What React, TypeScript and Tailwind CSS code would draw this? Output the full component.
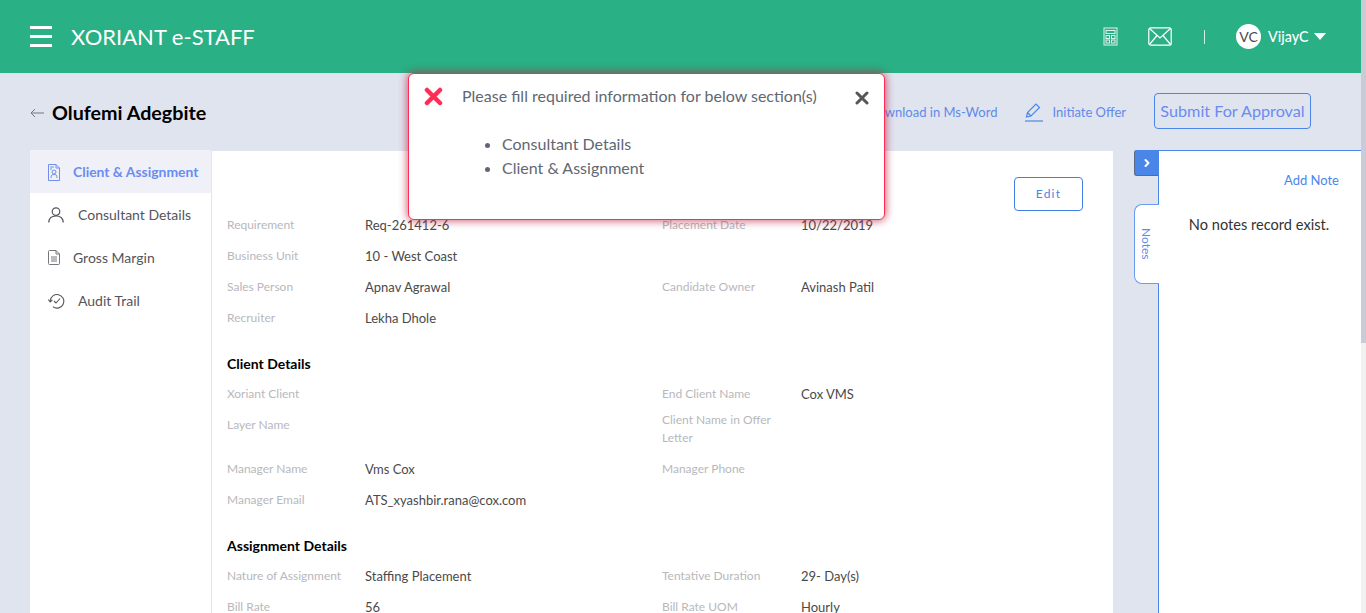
import { ChevronRight } from 'lucide-react';

const font = { fontFamily: 'Lato, sans-serif' };

interface FieldProps {
  label: string;
  value?: string;
  label2?: string;
  value2?: string;
  tall?: boolean;
}

function Row({ label, value, label2, value2, tall }: FieldProps) {
  if (tall) {
    return (
      <div className="grid grid-cols-[138px_297px_139px_1fr] items-start h-[44px]">
        <span className="text-[12px] leading-[29px] text-[#b8b8bc]">{label}</span>
        <span className="text-[13px] leading-[31px] text-[#4a4a4a]">{value}</span>
        <span className="mt-[1px] text-[12px] leading-[18px] text-[#b8b8bc]">{label2}</span>
        <span className="text-[13px] leading-[31px] text-[#4a4a4a]">{value2}</span>
      </div>
    );
  }
  return (
    <div className="grid grid-cols-[138px_297px_139px_1fr] items-center h-[31px]">
      <span className="pb-[2px] text-[12px] text-[#b8b8bc]">{label}</span>
      <span className="text-[13px] text-[#4a4a4a]">{value}</span>
      <span className="pb-[2px] text-[12px] text-[#b8b8bc]">{label2}</span>
      <span className="text-[13px] text-[#4a4a4a]">{value2}</span>
    </div>
  );
}

function Heading({ children }: { children: string }) {
  return <h3 className="mt-[15px] mb-[2px] h-[28px] flex items-center text-[14px] font-bold text-black">{children}</h3>;
}

function Hamburger() {
  return (
    <div className="flex flex-col gap-[6px] w-[22px]">
      <span className="h-[3px] bg-white" />
      <span className="h-[3px] bg-white" />
      <span className="h-[3px] bg-white" />
    </div>
  );
}

function CalcIcon() {
  return (
    <svg width="15" height="19" viewBox="0 0 15 19" fill="none" stroke="#fff" strokeOpacity="0.85">
      <rect x="1" y="1" width="13" height="17" />
      <rect x="3" y="3.5" width="9" height="3" />
      <rect x="3" y="8.5" width="3.5" height="3" />
      <rect x="8.5" y="8.5" width="3.5" height="3" />
      <rect x="3" y="13" width="3.5" height="3" />
      <rect x="8.5" y="13" width="3.5" height="3" />
    </svg>
  );
}

function MailIcon() {
  return (
    <svg width="24" height="19" viewBox="0 0 24 19" fill="none" stroke="#fff" strokeWidth="1.2">
      <rect x="0.8" y="0.8" width="22.4" height="17.4" rx="2" />
      <path d="M1.5 1.5 L12 11 L22.5 1.5 M1.5 17.5 L9 8.5 M22.5 17.5 L15 8.5" />
    </svg>
  );
}

function ClientIcon() {
  return (
    <svg width="12" height="17" viewBox="0 0 12 17" fill="none" stroke="#6f8fe8" strokeWidth="1">
      <path d="M0.5 0.5 H8 L11.5 4 V16.5 H0.5 Z M8 0.5 V4 H11.5" />
      <path d="M2 3 H6 M2 5 H4" />
      <circle cx="6" cy="8" r="2" />
      <path d="M3 14 C3 11 4 10.5 6 10.5 C8 10.5 9 11 9 14" />
    </svg>
  );
}

function UserIcon() {
  return (
    <svg width="16" height="16" viewBox="0 0 16 16" fill="none" stroke="#55555a" strokeWidth="1.2">
      <circle cx="8" cy="4.6" r="3.8" />
      <path d="M0.8 15.6 C0.8 11 3.8 9 8 9 C12.2 9 15.2 11 15.2 15.6" />
    </svg>
  );
}

function DocIcon() {
  return (
    <svg width="12" height="15" viewBox="0 0 12 15" fill="none" stroke="#77777b" strokeWidth="1">
      <path d="M0.5 1.5 Q0.5 0.5 1.5 0.5 H8 L11.5 4 V13.5 Q11.5 14.5 10.5 14.5 H1.5 Q0.5 14.5 0.5 13.5 Z M8 0.5 V4 H11.5" />
      <path d="M3 7 H9 M3 9 H9 M3 11 H9" />
    </svg>
  );
}

function AuditIcon() {
  return (
    <svg width="17" height="16" viewBox="0 0 17 16" fill="none" stroke="#55555a" strokeWidth="1.1">
      <path d="M2.2 8 A6.8 6.8 0 1 1 5 13.8" />
      <path d="M0.3 6.5 L2.2 9 L4.4 6.8" />
      <path d="M6 8 L8 10 L12 5.5" />
    </svg>
  );
}

function PencilIcon() {
  return (
    <svg width="20" height="20" viewBox="0 0 20 20" fill="none" stroke="#4a86e8" strokeWidth="1.2">
      <path d="M2.5 15 L3.5 10.5 L12 2 L15.5 5.5 L7 14 Z M3.5 10.5 L7 14" />
      <path d="M1 19 H19" />
    </svg>
  );
}

function NavItem({ icon, label, active, gap }: { icon: React.ReactNode; label: string; active?: boolean; gap: string }) {
  return (
    <div className={`h-[43px] pl-[18px] flex items-center ${gap} ${active ? 'pt-[1px] text-[13.9px] bg-[#f0f1f8] text-[#6a8cf0] font-bold' : 'text-[14px] text-[#55555a]'}`}>
      <span className="flex items-center">{icon}</span>
      <span>{label}</span>
    </div>
  );
}

export default function App() {
  return (
    <div style={font} className="relative h-[613px] overflow-hidden bg-[#e0e4ef]">
      {/* Header */}
      <header className="h-[73px] bg-[#2ab085] flex items-center pl-[30px] pr-[40px] text-white">
        <Hamburger />
        <span className="ml-[19px] text-[22px]">XORIANT e-STAFF</span>
        <div className="ml-auto flex items-center">
          <CalcIcon />
          <span className="ml-[30px]"><MailIcon /></span>
          <span className="ml-[32px] h-[14px] w-px bg-white/80" />
          <span className="ml-[31px] w-[25px] h-[25px] rounded-full bg-white text-[#4a4a4a] text-[14px] flex items-center justify-center">VC</span>
          <span className="ml-[7px] w-[40px] text-[14.3px] font-medium">VijayC</span>
          <span className="ml-[6px] w-0 h-0 border-x-[6.5px] border-x-transparent border-t-[7px] border-t-white" />
        </div>
      </header>

      {/* Title row */}
      <div className="h-[78px] pl-[30px] pr-[55px] flex items-center justify-between">
        <div className="flex items-center gap-[8px]">
          <svg width="14" height="10" viewBox="0 0 14 10" fill="none" stroke="#77777b" className="mt-[3px]">
            <path d="M14 5 H1 M5 1 L1 5 L5 9" />
          </svg>
          <h1 className="pt-[2px] text-[19.7px] font-bold text-black">Olufemi Adegbite</h1>
        </div>
        <div className="flex items-center text-[#5f8ae8] text-[13px]">
          <span className="mt-[2px]">Download in Ms-Word</span>
          <span className="ml-[27px]"><PencilIcon /></span>
          <span className="ml-[8px] mt-[2px]">Initiate Offer</span>
          <button className="ml-[28px] mb-[2px] w-[157px] h-[36px] rounded-[4px] border border-[#4a86e8] text-[16.2px] text-[#6a8cf0]">
            Submit For Approval
          </button>
        </div>
      </div>

      {/* Body */}
      <div className="flex items-start">
        <nav className="ml-[30px] -mt-[1px] w-[181px] h-[463px] bg-white shrink-0">
          <NavItem active gap="gap-[13px]" label="Client & Assignment" icon={<ClientIcon />} />
          <NavItem gap="gap-[14px]" label="Consultant Details" icon={<UserIcon />} />
          <NavItem gap="gap-[13px]" label="Gross Margin" icon={<DocIcon />} />
          <NavItem gap="gap-[13px]" label="Audit Trail" icon={<AuditIcon />} />
        </nav>

        <main className="w-[902px] h-[462px] bg-white border-l border-[#e6e6ea] pl-[15px] pr-[30px] shrink-0">
          <div className="h-[60px] -mb-[1px] flex items-end justify-end">
            <button className="w-[69px] h-[34px] rounded-[4px] border border-[#3f7fe5] text-[12px] tracking-[1.2px] text-[#4a86e8]">
              Edit
            </button>
          </div>
          <Row label="Requirement" value="Req-261412-6" label2="Placement Date" value2="10/22/2019" />
          <Row label="Business Unit" value="10 - West Coast" />
          <Row label="Sales Person" value="Apnav Agrawal" label2="Candidate Owner" value2="Avinash Patil" />
          <Row label="Recruiter" value="Lekha Dhole" />
          <Heading>Client Details</Heading>
          <Row label="Xoriant Client" label2="End Client Name" value2="Cox VMS" />
          <Row tall label="Layer Name" label2="Client Name in Offer Letter" />
          <Row label="Manager Name" value="Vms Cox" label2="Manager Phone" />
          <Row label="Manager Email" value="ATS_xyashbir.rana@cox.com" />
          <Heading>Assignment Details</Heading>
          <Row label="Nature of Assignment" value="Staffing Placement" label2="Tentative Duration" value2="29- Day(s)" />
          <Row label="Bill Rate" value="56" label2="Bill Rate UOM" value2="Hourly" />
        </main>

        {/* Notes */}
        <div className="ml-[21px] -mt-[1px] w-[24px] shrink-0 flex flex-col relative z-10">
          <button className="w-[24px] h-[26px] rounded-l-[3px] bg-[#4a86e8] border-l border-b border-[#5a6a80] flex items-center justify-center">
            <ChevronRight size={12} strokeWidth={4} className="text-white" />
          </button>
          <div className="mt-[28px] w-[25px] h-[80px] pr-[2px] bg-white rounded-l-[8px] border-l border-y border-[#6a9cf0] flex items-center justify-center">
            <span className="[writing-mode:vertical-rl] text-[12px] text-[#5f8ae8]">Notes</span>
          </div>
        </div>
        <aside className="w-[203px] -mt-[1px] h-[463px] bg-white border-l border-t border-[#4a86e8] shrink-0">
          <div className="h-[59px] pr-[22px] flex items-center justify-end text-[13px] text-[#4a86e8]">Add Note</div>
          <p className="pt-[4px] pr-[2px] text-center text-[14.6px] text-[#333]">No notes record exist.</p>
        </aside>
      </div>

      {/* Scrollbar */}
      <div className="absolute right-0 top-0 bottom-0 w-[5px] bg-[#f1f1f1]">
        <div className="h-[343px] bg-[#c9ccd6]" />
      </div>

      {/* Alert */}
      <div className="absolute left-[408px] top-[73px] w-[477px] h-[147px] bg-white rounded-[6px] border border-[#ff2d55] shadow-[0_0_8px_rgba(255,45,85,0.65),0_0_10px_rgba(0,0,0,0.3)]">
        <div className="flex items-start pl-[15px] pr-[15px] pt-[13px]">
          <svg width="19" height="19" viewBox="0 0 19 19" className="shrink-0">
            <path d="M3 3 L16 16 M16 3 L3 16" stroke="#ff2d55" strokeWidth="4.5" strokeLinecap="round" />
          </svg>
          <span className="ml-[19px] -mt-[1px] text-[16px] leading-[20px] text-[#5f6872]">Please fill required information for below section(s)</span>
          <svg width="14" height="14" viewBox="0 0 14 14" className="ml-auto mt-[4px] shrink-0">
            <path d="M2 2 L12 12 M12 2 L2 12" stroke="#55555a" strokeWidth="3" strokeLinecap="round" />
          </svg>
        </div>
        <ul className="mt-[26px] pl-[93px] list-disc text-[16px] leading-[24px] text-[#5f6872]">
          <li>Consultant Details</li>
          <li>Client &amp; Assignment</li>
        </ul>
      </div>
    </div>
  );
}
